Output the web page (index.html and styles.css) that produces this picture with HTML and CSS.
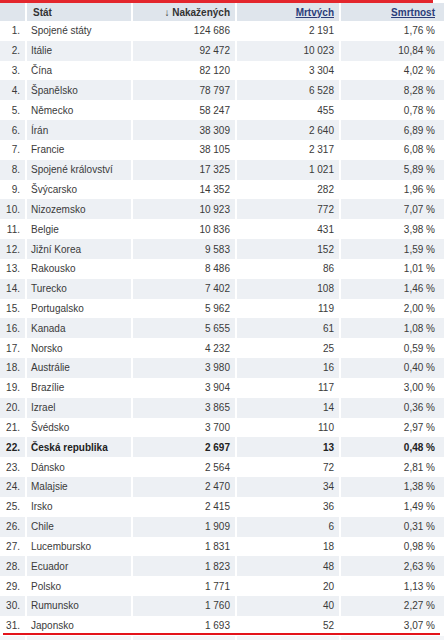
FILE: index.html
```html
<!DOCTYPE html>
<html lang="cs">
<head>
<meta charset="utf-8">
<link rel="stylesheet" href="styles.css">
</head>
<body>
<div class="topbar"></div>
<div class="wrap">
<table class="stats">
<thead>
<tr><th class="rank"></th><th class="name">Stát</th><th class="num">↓ Nakažených</th><th class="num"><a href="#">Mrtvých</a></th><th class="num pct"><a href="#">Smrtnost</a></th></tr>
</thead>
<tbody>
<tr><td class="rank">1.</td><td class="name">Spojené státy</td><td class="num">124 686</td><td class="num">2 191</td><td class="num pct">1,76 %</td></tr>
<tr><td class="rank">2.</td><td class="name">Itálie</td><td class="num">92 472</td><td class="num">10 023</td><td class="num pct">10,84 %</td></tr>
<tr><td class="rank">3.</td><td class="name">Čína</td><td class="num">82 120</td><td class="num">3 304</td><td class="num pct">4,02 %</td></tr>
<tr><td class="rank">4.</td><td class="name">Španělsko</td><td class="num">78 797</td><td class="num">6 528</td><td class="num pct">8,28 %</td></tr>
<tr><td class="rank">5.</td><td class="name">Německo</td><td class="num">58 247</td><td class="num">455</td><td class="num pct">0,78 %</td></tr>
<tr><td class="rank">6.</td><td class="name">Írán</td><td class="num">38 309</td><td class="num">2 640</td><td class="num pct">6,89 %</td></tr>
<tr><td class="rank">7.</td><td class="name">Francie</td><td class="num">38 105</td><td class="num">2 317</td><td class="num pct">6,08 %</td></tr>
<tr><td class="rank">8.</td><td class="name">Spojené království</td><td class="num">17 325</td><td class="num">1 021</td><td class="num pct">5,89 %</td></tr>
<tr><td class="rank">9.</td><td class="name">Švýcarsko</td><td class="num">14 352</td><td class="num">282</td><td class="num pct">1,96 %</td></tr>
<tr><td class="rank">10.</td><td class="name">Nizozemsko</td><td class="num">10 923</td><td class="num">772</td><td class="num pct">7,07 %</td></tr>
<tr><td class="rank">11.</td><td class="name">Belgie</td><td class="num">10 836</td><td class="num">431</td><td class="num pct">3,98 %</td></tr>
<tr><td class="rank">12.</td><td class="name">Jižní Korea</td><td class="num">9 583</td><td class="num">152</td><td class="num pct">1,59 %</td></tr>
<tr><td class="rank">13.</td><td class="name">Rakousko</td><td class="num">8 486</td><td class="num">86</td><td class="num pct">1,01 %</td></tr>
<tr><td class="rank">14.</td><td class="name">Turecko</td><td class="num">7 402</td><td class="num">108</td><td class="num pct">1,46 %</td></tr>
<tr><td class="rank">15.</td><td class="name">Portugalsko</td><td class="num">5 962</td><td class="num">119</td><td class="num pct">2,00 %</td></tr>
<tr><td class="rank">16.</td><td class="name">Kanada</td><td class="num">5 655</td><td class="num">61</td><td class="num pct">1,08 %</td></tr>
<tr><td class="rank">17.</td><td class="name">Norsko</td><td class="num">4 232</td><td class="num">25</td><td class="num pct">0,59 %</td></tr>
<tr><td class="rank">18.</td><td class="name">Austrálie</td><td class="num">3 980</td><td class="num">16</td><td class="num pct">0,40 %</td></tr>
<tr><td class="rank">19.</td><td class="name">Brazílie</td><td class="num">3 904</td><td class="num">117</td><td class="num pct">3,00 %</td></tr>
<tr><td class="rank">20.</td><td class="name">Izrael</td><td class="num">3 865</td><td class="num">14</td><td class="num pct">0,36 %</td></tr>
<tr><td class="rank">21.</td><td class="name">Švédsko</td><td class="num">3 700</td><td class="num">110</td><td class="num pct">2,97 %</td></tr>
<tr class="hl"><td class="rank">22.</td><td class="name">Česká republika</td><td class="num">2 697</td><td class="num">13</td><td class="num pct">0,48 %</td></tr>
<tr><td class="rank">23.</td><td class="name">Dánsko</td><td class="num">2 564</td><td class="num">72</td><td class="num pct">2,81 %</td></tr>
<tr><td class="rank">24.</td><td class="name">Malajsie</td><td class="num">2 470</td><td class="num">34</td><td class="num pct">1,38 %</td></tr>
<tr><td class="rank">25.</td><td class="name">Irsko</td><td class="num">2 415</td><td class="num">36</td><td class="num pct">1,49 %</td></tr>
<tr><td class="rank">26.</td><td class="name">Chile</td><td class="num">1 909</td><td class="num">6</td><td class="num pct">0,31 %</td></tr>
<tr><td class="rank">27.</td><td class="name">Lucembursko</td><td class="num">1 831</td><td class="num">18</td><td class="num pct">0,98 %</td></tr>
<tr><td class="rank">28.</td><td class="name">Ecuador</td><td class="num">1 823</td><td class="num">48</td><td class="num pct">2,63 %</td></tr>
<tr><td class="rank">29.</td><td class="name">Polsko</td><td class="num">1 771</td><td class="num">20</td><td class="num pct">1,13 %</td></tr>
<tr><td class="rank">30.</td><td class="name">Rumunsko</td><td class="num">1 760</td><td class="num">40</td><td class="num pct">2,27 %</td></tr>
<tr><td class="rank">31.</td><td class="name">Japonsko</td><td class="num">1 693</td><td class="num">52</td><td class="num pct">3,07 %</td></tr>
<tr class="cut"><td class="rank"></td><td class="name"></td><td class="num"></td><td class="num"></td><td class="num pct"></td></tr>
</tbody>
</table>
<div class="redline"></div>
</div>
</body>
</html>
```
FILE: styles.css
```css
html, body {
  margin: 0;
  padding: 0;
  background: #fff;
  overflow: hidden;
}
body {
  font-family: "Liberation Sans", Arial, sans-serif;
  font-size: 10px;
  color: #3a3a3a;
}
.topbar {
  width: 433px;
  height: 3px;
  background: #e3262d;
}
.wrap {
  position: relative;
  width: 447px;
}
.stats {
  width: 448px;
  border-collapse: separate;
  border-spacing: 2px 0;
  margin-left: -2px;
  table-layout: fixed;
}
.stats th,
.stats td {
  padding: 0 5px;
  white-space: nowrap;
  overflow: hidden;
}
.stats th {
  height: 18px;
  background: #dfe5ec;
  font-weight: bold;
  color: #333;
  text-align: left;
}
.stats td {
  height: 19.83px;
}
.stats tbody tr:nth-child(even) td {
  background: #edf0f4;
}
.rank { width: 15px; }
.stats th.rank, .stats td.rank { text-align: right; }
.name { width: 93px; }
.stats .name { padding-left: 4px; }
.stats th.name { padding-left: 6px; }
.num { width: 92px; }
.stats th.num, .stats td.num { text-align: right; }
.stats .pct { width: auto; padding-right: 9px; }
.stats a {
  color: #2b3d7a;
  text-decoration: underline;
}
.hl td { font-weight: bold; color: #222; }
.stats tbody tr.cut td { background: #f3f5f8; }
.redline {
  position: absolute;
  left: 3px;
  top: 630px;
  width: 437px;
  height: 2px;
  background: #e3131b;
}
```
